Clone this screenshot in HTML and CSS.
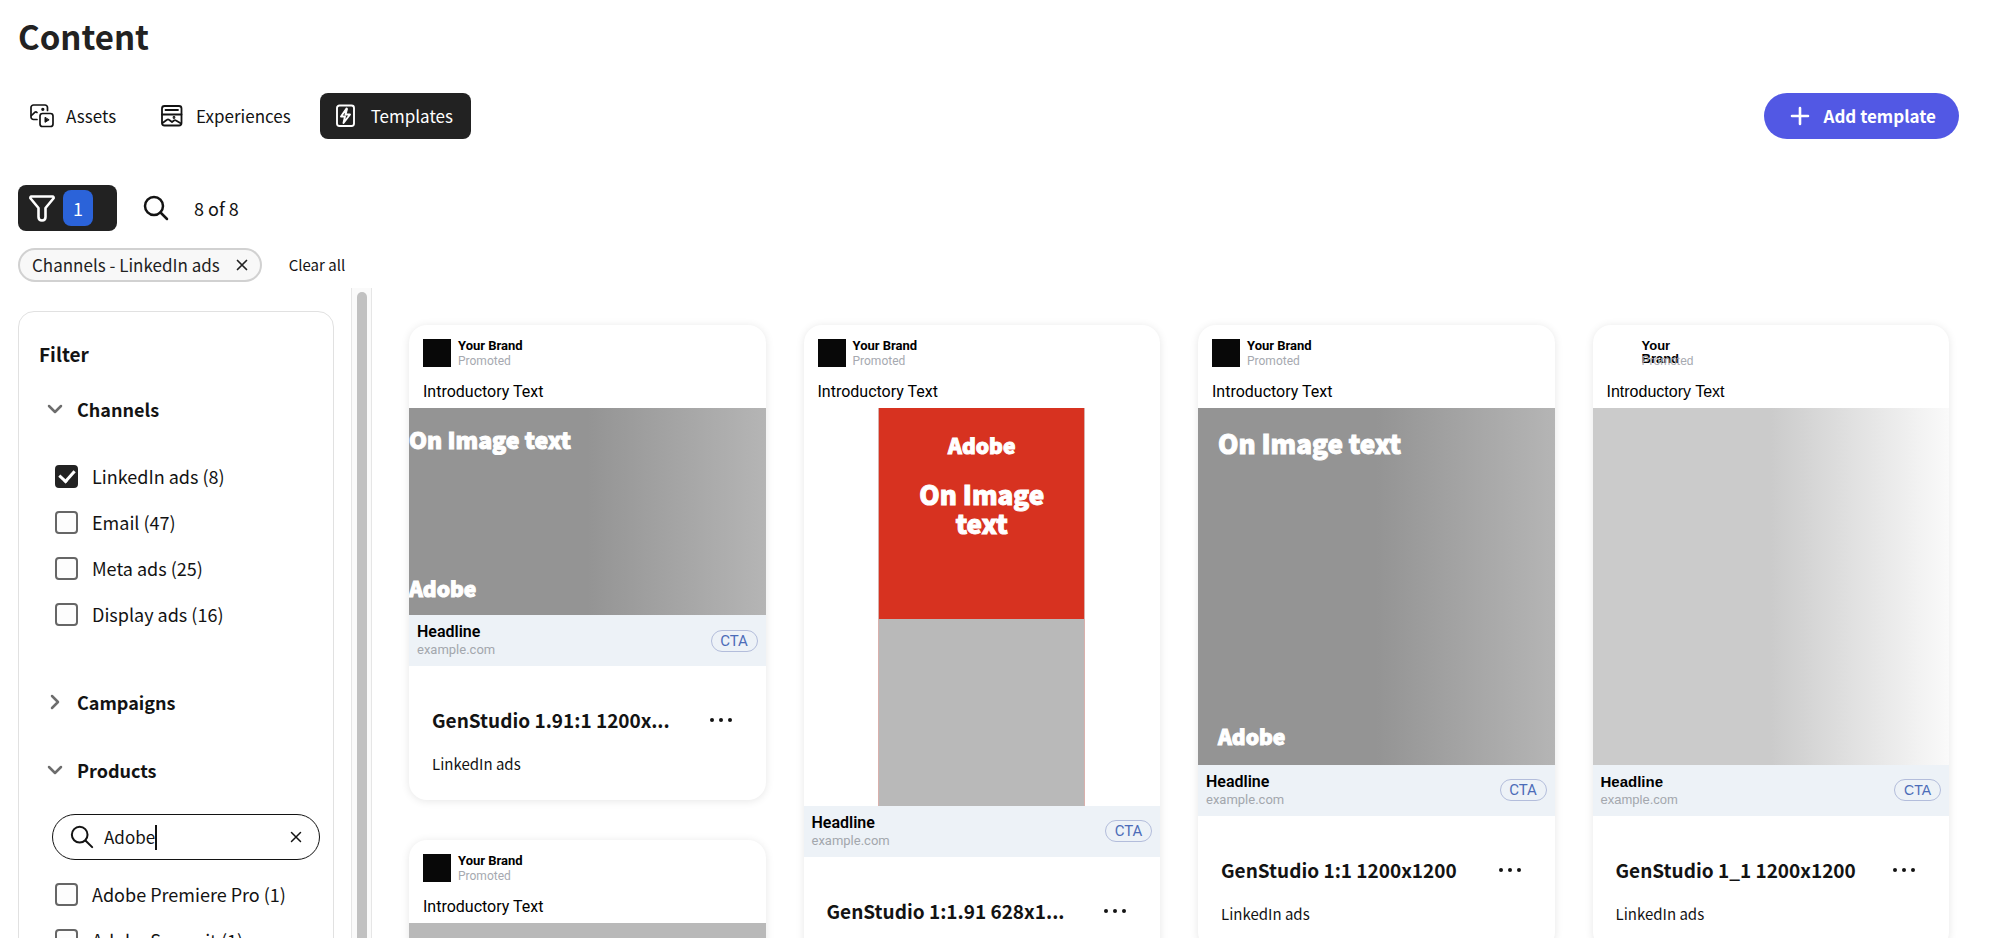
FILE: index.html
```html
<!DOCTYPE html>
<html lang="en">
<head>
<meta charset="utf-8">
<title>Content</title>
<link rel="stylesheet" href="styles.css">
</head>
<body>
<div class="app">
  <header class="header">
    <h1 class="title">Content</h1>
    <div class="bar">
      <nav class="tabs">
        <button class="tab" type="button">
          <svg class="tab-icon" viewBox="0 0 24 24" fill="none" stroke="currentColor" stroke-width="1.700" stroke-linecap="round" stroke-linejoin="round"><path d="M7 15.500H3.500a2.500 2.500 0 0 1-2.500-2.500V3.500A2.500 2.500 0 0 1 3.500 1H15a2.500 2.500 0 0 1 2.500 2.500V6.500"/><path d="M1.500 11.500L5 8.200Q6 7.500 7 8.500"/><rect x="10" y="9.500" width="13" height="13" rx="2.500"/><circle cx="12.800" cy="5.300" r=".8" fill="currentColor"/><path d="M15 13.700v4.600l3.800-2.300z" fill="currentColor" stroke-width="1"/></svg>
          Assets
        </button>
        <button class="tab" type="button">
          <svg class="tab-icon" viewBox="0 0 24 24" fill="none" stroke="currentColor" stroke-width="1.800" stroke-linecap="round" stroke-linejoin="round"><rect x="2" y="2" width="19.500" height="19.500" rx="2.500"/><path d="M5.500 6h12.500M2 10.500h19.500M2.500 19l4.500-3.200q1-.8 2 0l3 2.200 2-1.500q1-.7 2 0l5 3"/><circle cx="14" cy="13.500" r=".5" fill="currentColor"/></svg>
          Experiences
        </button>
        <button class="tab tab-active" type="button">
          <svg class="tab-icon" viewBox="0 0 24 24" fill="none" stroke="currentColor" stroke-width="1.900" stroke-linecap="round" stroke-linejoin="round"><rect x="2" y="1.500" width="17" height="20.500" rx="2.500"/><path d="M11.500 4.500L6 12.500h4L8.500 19l6.500-8.500h-4.500L12 5z" stroke-width="1.900"/></svg>
          Templates
        </button>
      </nav>
      <button class="add" type="button">
        <svg class="add-icon" viewBox="0 0 20 20" fill="none" stroke="currentColor" stroke-width="2.600" stroke-linecap="round"><path d="M10 2v16M2 10h16"/></svg>
        Add template
      </button>
    </div>
    <div class="tools">
      <button class="filter-toggle" type="button" aria-label="Filter">
        <svg class="funnel" viewBox="0 0 28 28" fill="none" stroke="currentColor" stroke-width="2.600" stroke-linejoin="round"><path d="M3.500 2.500h21a1.200 1.200 0 0 1 .9 2L17.500 14v9q0 3.500-3.500 3.500t-3.500-3.500v-9L2.600 4.500a1.200 1.200 0 0 1 .9-2z"/></svg>
        <span class="count">1</span>
      </button>
      <button class="icon-button" type="button" aria-label="Search">
        <svg class="search-icon" viewBox="0 0 26 26" fill="none" stroke="currentColor" stroke-width="2.500" stroke-linecap="round"><circle cx="11" cy="11" r="9"/><path d="M17.500 17.500L24 24"/></svg>
      </button>
      <span class="result">8 of 8</span>
    </div>
    <div class="chips">
      <span class="chip">Channels - LinkedIn ads
        <button class="icon-button" type="button" aria-label="Remove"><svg class="cross" viewBox="0 0 12 12" fill="none" stroke="currentColor" stroke-width="1.700" stroke-linecap="round"><path d="M1.500 1.500l9 9M10.500 1.500l-9 9"/></svg></button>
      </span>
      <button class="clear-all" type="button">Clear all</button>
    </div>
  </header>

  <main class="body">
    <aside class="sidebar">
      <section class="panel">
        <h2 class="panel-title">Filter</h2>
        <button class="group" type="button"><svg class="chevron" viewBox="0 0 16 16"><path d="M2 5l6 6 6-6"/></svg>Channels</button>
        <div class="options options-channels">
          <label class="option"><input type="checkbox" checked>LinkedIn ads (8)</label>
          <label class="option"><input type="checkbox">Email (47)</label>
          <label class="option"><input type="checkbox">Meta ads (25)</label>
          <label class="option"><input type="checkbox">Display ads (16)</label>
        </div>
        <button class="group group-closed" type="button"><svg class="chevron" viewBox="0 0 16 16"><path d="M5 2l6 6-6 6"/></svg>Campaigns</button>
        <button class="group" type="button"><svg class="chevron" viewBox="0 0 16 16"><path d="M2 5l6 6 6-6"/></svg>Products</button>
        <div class="search">
          <svg class="search-small" viewBox="0 0 26 26" fill="none" stroke="currentColor" stroke-width="2.200" stroke-linecap="round"><circle cx="10.500" cy="10.500" r="8.500"/><path d="M17 17l7 7"/></svg>
          <input class="search-input" type="text" value="Adobe" aria-label="Search products">
          <span class="caret"></span>
          <button class="icon-button search-clear" type="button" aria-label="Clear"><svg class="cross" viewBox="0 0 12 12" fill="none" stroke="currentColor" stroke-width="1.500" stroke-linecap="round"><path d="M1.500 1.500l9 9M10.500 1.500l-9 9"/></svg></button>
        </div>
        <div class="options options-products">
          <label class="option"><input type="checkbox">Adobe Premiere Pro (1)</label>
          <label class="option"><input type="checkbox">Adobe Summit (1)</label>
        </div>
      </section>
    </aside>
    <div class="scrollbar"><div class="thumb"></div></div>

    <div class="grid">
      <div class="column">
        <article class="card">
          <div class="post-head"><div class="avatar"></div><div class="brand"><b>Your Brand</b><span>Promoted</span></div></div>
          <p class="intro">Introductory Text</p>
          <div class="art art-wide"><p class="art-text art-text-small">On Image text</p><p class="wordmark">Adobe</p></div>
          <div class="cta-bar"><div class="link"><b>Headline</b><span>example.com</span></div><button class="cta" type="button">CTA</button></div>
          <footer class="card-foot">
            <div class="card-row"><h3 class="card-title">GenStudio 1.91:1 1200x...</h3><button class="more" type="button" aria-label="More"><i></i><i></i><i></i></button></div>
            <p class="card-sub">LinkedIn ads</p>
          </footer>
        </article>
        <article class="card">
          <div class="post-head"><div class="avatar"></div><div class="brand"><b>Your Brand</b><span>Promoted</span></div></div>
          <p class="intro">Introductory Text</p>
          <div class="art art-plain"></div>
        </article>
      </div>

      <div class="column">
        <article class="card">
          <div class="post-head"><div class="avatar"></div><div class="brand"><b>Your Brand</b><span>Promoted</span></div></div>
          <p class="intro">Introductory Text</p>
          <div class="tall"><div class="tall-inner"><div class="tall-red"><p class="wordmark">Adobe</p><p class="art-text">On Image text</p></div></div></div>
          <div class="cta-bar"><div class="link"><b>Headline</b><span>example.com</span></div><button class="cta" type="button">CTA</button></div>
          <footer class="card-foot">
            <div class="card-row"><h3 class="card-title">GenStudio 1:1.91 628x1...</h3><button class="more" type="button" aria-label="More"><i></i><i></i><i></i></button></div>
            <p class="card-sub">LinkedIn ads</p>
          </footer>
        </article>
      </div>

      <div class="column">
        <article class="card">
          <div class="post-head"><div class="avatar"></div><div class="brand"><b>Your Brand</b><span>Promoted</span></div></div>
          <p class="intro">Introductory Text</p>
          <div class="art art-square"><p class="art-text">On Image text</p><p class="wordmark">Adobe</p></div>
          <div class="cta-bar"><div class="link"><b>Headline</b><span>example.com</span></div><button class="cta" type="button">CTA</button></div>
          <footer class="card-foot">
            <div class="card-row"><h3 class="card-title">GenStudio 1:1 1200x1200</h3><button class="more" type="button" aria-label="More"><i></i><i></i><i></i></button></div>
            <p class="card-sub">LinkedIn ads</p>
          </footer>
        </article>
      </div>

      <div class="column">
        <article class="card card-arial">
          <div class="post-head"><div class="avatar avatar-empty"></div><div class="brand brand-narrow"><b>Your Brand</b><span>Promoted</span></div></div>
          <p class="intro">Introductory Text</p>
          <div class="art art-light"></div>
          <div class="cta-bar"><div class="link"><b>Headline</b><span>example.com</span></div><button class="cta" type="button">CTA</button></div>
          <footer class="card-foot">
            <div class="card-row"><h3 class="card-title">GenStudio 1_1 1200x1200</h3><button class="more" type="button" aria-label="More"><i></i><i></i><i></i></button></div>
            <p class="card-sub">LinkedIn ads</p>
          </footer>
        </article>
      </div>
    </div>
  </main>
</div>
</body>
</html>
```
FILE: styles.css
```css
* { box-sizing: border-box; }

body {
  margin: 0;
  background: #fff;
  color: #131313;
  font-family: "Noto Sans CJK SC", "Noto Sans", sans-serif;
  font-size: 18px;
  line-height: 24px;
}

button, input { font: inherit; color: inherit; }
button { margin: 0; padding: 0; border: 0; background: none; }
h1, h2, h3, p { margin: 0; }

.app { display: flex; flex-direction: column; height: 100vh; overflow: hidden; }

/* Header */
.header { flex: none; padding: 14px 41px 6px 18px; }
.title { font-size: 33px; line-height: 44px; font-weight: 700; color: #222; }
.bar { display: flex; justify-content: space-between; align-items: center; margin-top: 35px; font-size: 17px; }
.tabs { display: flex; gap: 14px; margin-left: -3px; }
.tab { display: flex; align-items: center; gap: 12px; height: 46px; padding: 0 15px; border-radius: 8px; }
.tab-active { background: #222; color: #fff; padding-right: 18px; }
.tab-icon { width: 24px; height: 24px; }
.add { display: flex; align-items: center; gap: 14px; height: 46px; padding: 0 23px 0 26px; border-radius: 23px; background: #5258e4; color: #fff; font-weight: 700; }
.add-icon { width: 20px; height: 20px; }

.tools { display: flex; align-items: center; margin-top: 46px; }
.filter-toggle { display: flex; align-items: center; gap: 7px; width: 99px; height: 46px; padding-left: 10px; border-radius: 8px; background: #222; color: #fff; }
.funnel { width: 28px; height: 28px; }
.count { width: 30px; height: 36px; border-radius: 8px; background: #2b63d9; line-height: 36px; text-align: center; }
.icon-button { display: flex; align-items: center; justify-content: center; }
.search-icon { width: 26px; height: 26px; margin: 0 25px 0 26px; }

.chips { display: flex; align-items: center; gap: 27px; margin-top: 17px; }
.chip { display: flex; align-items: center; gap: 16px; height: 34px; padding: 0 12px; border: 2px solid #d1d1d1; border-radius: 17px; background: #f8f8f8; color: #222; font-size: 17px; }
.cross { width: 12px; height: 12px; }
.clear-all { font-size: 15px; }

/* Body */
.body { display: flex; flex: 1; min-height: 0; }
.sidebar { flex: none; width: 351px; padding: 23px 17px 0 18px; overflow: hidden; }
.panel { padding: 28px 13px 40px 20px; border: 1px solid #e1e1e1; border-radius: 16px; }
.panel-title { font-size: 19px; line-height: 28px; font-weight: 700; }
.group { display: flex; align-items: center; gap: 14px; width: 100%; height: 24px; margin: 29px 0 0 8px; font-weight: 700; }
.group-closed { margin-top: 64px; }
.group-closed + .group { margin-top: 44px; }
.chevron { width: 16px; height: 16px; fill: none; stroke: #6d6d6d; stroke-width: 2.5; stroke-linecap: round; stroke-linejoin: round; }
.options { display: flex; flex-direction: column; gap: 22px; padding-left: 16px; }
.options-channels { margin-top: 43px; }
.options-products { margin-top: 22px; }
.option { display: flex; align-items: center; gap: 14px; height: 24px; white-space: nowrap; }
.option input {
  appearance: none; flex: none; width: 23px; height: 23px; margin: 0;
  border: 2px solid #666; border-radius: 4px; background: #fdfdfd;
}
.option input:checked { display: grid; place-items: center; border-color: #222; background: #222; }
.option input:checked::after {
  content: ""; width: 7px; height: 12px; margin-bottom: 3px;
  border: solid #fff; border-width: 0 3px 3px 0; rotate: 42deg;
}
.search { display: flex; align-items: center; height: 46px; margin: 32px 0 0 13px; padding: 0 17px; border: 1px solid #131313; border-radius: 23px; font-size: 17px; }
.search-small { width: 24px; height: 24px; margin-right: 10px; }
.search-input { field-sizing: content; padding: 0; border: 0; outline: 0; background: none; }
.caret { width: 2px; height: 25px; background: #131313; }
.search-clear { margin-left: auto; }

.scrollbar { flex: none; width: 21px; padding: 4px 4px 0 5px; border: solid #e6e6e6; border-width: 0 1px; background: #fafafa; overflow: hidden; }
.thumb { height: calc(100% + 8px); border-radius: 6px; background: #c1c1c1; }

/* Cards */
.grid { flex: 1; display: grid; grid-template-columns: repeat(4, minmax(0, 1fr)); gap: 38px; padding: 37px 51px 0 37px; overflow: hidden; }
.column { display: flex; flex-direction: column; gap: 40px; }
.card { flex: none; border-radius: 18px; overflow: hidden; background: #fff; box-shadow: 0 1px 9px rgba(0, 0, 0, .1); font-family: Roboto, sans-serif; }
.card-arial { font-family: "Liberation Sans", Arial, sans-serif; }
.post-head { display: flex; gap: 7px; height: 43px; padding: 14px 14px 0; }
.avatar { width: 28px; height: 28px; background: #080808; }
.avatar-empty { background: none; }
.brand { font-size: 13px; line-height: 13px; color: #000; }
.brand b, .brand span { display: block; }
.brand span { margin-top: 3px; font-size: 12px; color: #a6a9b0; }
.brand-narrow { width: 44px; }
.brand-narrow span { margin-top: -10px; }
.intro { height: 40px; padding: 12px 14px 0; font-size: 16px; line-height: 24px; color: #000; }
.art { display: flex; flex-direction: column; justify-content: space-between; background: linear-gradient(90deg, #949494 50%, #b5b5b5); }
.art-wide { aspect-ratio: 356 / 207; padding: 14px 0 13px; }
.art-square { aspect-ratio: 1; padding: 18px 20px 15px; }
.art-light { aspect-ratio: 1; background: linear-gradient(90deg, #cbcbcb 50%, #fafafa); }
.art-plain { aspect-ratio: 1; background: #b9b9b9; }
.art-text, .wordmark { font-family: "Noto Sans CJK SC", "Noto Sans", sans-serif; font-weight: 900; color: #fff; -webkit-text-stroke: 1px #fff; }
.art-text { font-size: 26px; line-height: 34px; }
.art-text-small { font-size: 23px; }
.wordmark { font-size: 21px; line-height: 28px; }
.tall { display: flex; justify-content: center; aspect-ratio: 356 / 397; }
.tall-inner { width: 58%; background: #b9b9b9; border: 1px solid #d9b0ac; border-width: 0 1px; }
.tall-red { height: 53%; padding: 23px 32px 0; background: #d73220; text-align: center; }
.tall-red .art-text { margin-top: 20px; line-height: 29px; }
.cta-bar { display: flex; align-items: center; justify-content: space-between; height: 51px; padding: 0 8px; background: #edf2f7; }
.link { padding-top: 1px; line-height: 18px; }
.link b, .link span { display: block; }
.link b { font-size: 16px; font-weight: 600; color: #000; }
.link span { font-size: 13px; color: #a3a7ad; }
.card-arial .link b { font-size: 15px; }
.cta { width: 47px; height: 22px; border: 1px solid #b3bddb; border-radius: 11px; font-size: 15px; line-height: 18px; color: #4c6cb8; }
.card-arial .cta { font-size: 14px; }
.card-foot { padding: 40px 34px 24px 23px; font-family: "Noto Sans CJK SC", "Noto Sans", sans-serif; }
.card-row { display: flex; align-items: center; gap: 20px; }
.card-title { flex: 1; min-width: 0; font-size: 19px; line-height: 28px; font-weight: 700; overflow: hidden; text-overflow: ellipsis; white-space: nowrap; }
.more { display: flex; gap: 5px; }
.more i { width: 4px; height: 4px; border-radius: 2px; background: #131313; }
.card-sub { margin-top: 18px; font-size: 15px; line-height: 24px; }
```
